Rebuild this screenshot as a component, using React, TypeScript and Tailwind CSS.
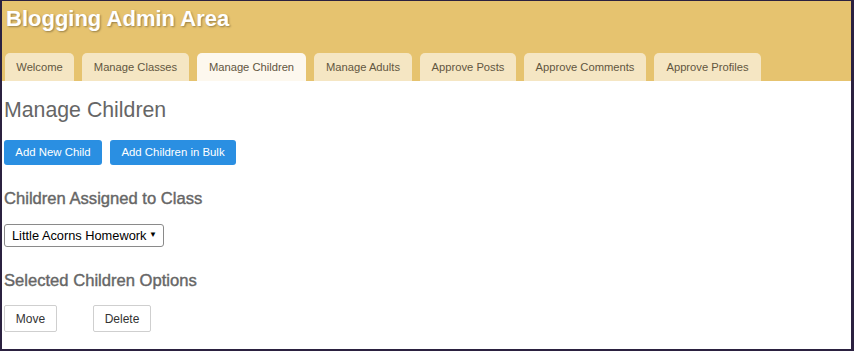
import React from "react";

const tabs = [
  { label: "Welcome", w: 69 },
  { label: "Manage Classes", w: 107 },
  { label: "Manage Children", w: 109, active: true },
  { label: "Manage Adults", w: 98 },
  { label: "Approve Posts", w: 96 },
  { label: "Approve Comments", w: 122 },
  { label: "Approve Profiles", w: 107 },
];

export default function App() {
  return (
    <div
      className="w-[854px] h-[351px] bg-white border-[#2b2140] border-l-2 border-t border-r-[3px] border-b-2 flex flex-col overflow-hidden"
      style={{ fontFamily: '"Liberation Sans", Arial, sans-serif' }}
    >
      <div className="bg-[#e6c36f] h-[80px] flex flex-col justify-between">
        <h1
          className="text-white font-bold text-[22px] leading-none pl-[4px] pt-[7px]"
          style={{ textShadow: "1px 1px 2px rgba(0,0,0,0.35)" }}
        >
          Blogging Admin Area
        </h1>
        <div className="flex gap-[8px] pl-[3px]">
          {tabs.map((t) => (
            <div
              key={t.label}
              style={{ width: t.w }}
              className={`h-[28px] rounded-t-[5px] flex items-center justify-center text-[11.2px] text-[#62563f] ${
                t.active ? "bg-[#fdf8ee]" : "bg-[#f5e6c3]"
              }`}
            >
              {t.label}
            </div>
          ))}
        </div>
      </div>
      <div className="pl-[2px] flex flex-col">
        <h2 className="text-[21.3px] leading-none text-[#666] mt-[19px]">Manage Children</h2>
        <div className="flex gap-[8px] mt-[19px]">
          <button className="h-[25px] w-[98px] rounded-[3px] bg-[#2a8fe2] text-white text-[11.4px]">
            Add New Child
          </button>
          <button className="h-[25px] w-[126px] rounded-[3px] bg-[#2a8fe2] text-white text-[11.4px]">
            Add Children in Bulk
          </button>
        </div>
        <h3 className="text-[16.6px] leading-none text-[#666] mt-[26px] [-webkit-text-stroke:0.4px_#666]">
          Children Assigned to Class
        </h3>
        <div className="mt-[16px]">
          <div className="w-[160px] h-[23px] border border-[#8a8a8a] rounded-[3px] flex items-center justify-between pl-[7px] pr-[6px] text-[12.8px] text-black">
            <span>Little Acorns Homework</span>
            <span className="text-[8px]">▼</span>
          </div>
        </div>
        <h3 className="text-[16.6px] leading-none text-[#666] mt-[26px] [-webkit-text-stroke:0.4px_#666]">
          Selected Children Options
        </h3>
        <div className="flex gap-[36px] mt-[16px]">
          <button className="h-[27px] w-[53px] border border-[#cfcfcf] rounded-[2px] bg-white text-[12px] text-[#333]">
            Move
          </button>
          <button className="h-[27px] w-[58px] border border-[#cfcfcf] rounded-[2px] bg-white text-[12px] text-[#333]">
            Delete
          </button>
        </div>
      </div>
    </div>
  );
}
